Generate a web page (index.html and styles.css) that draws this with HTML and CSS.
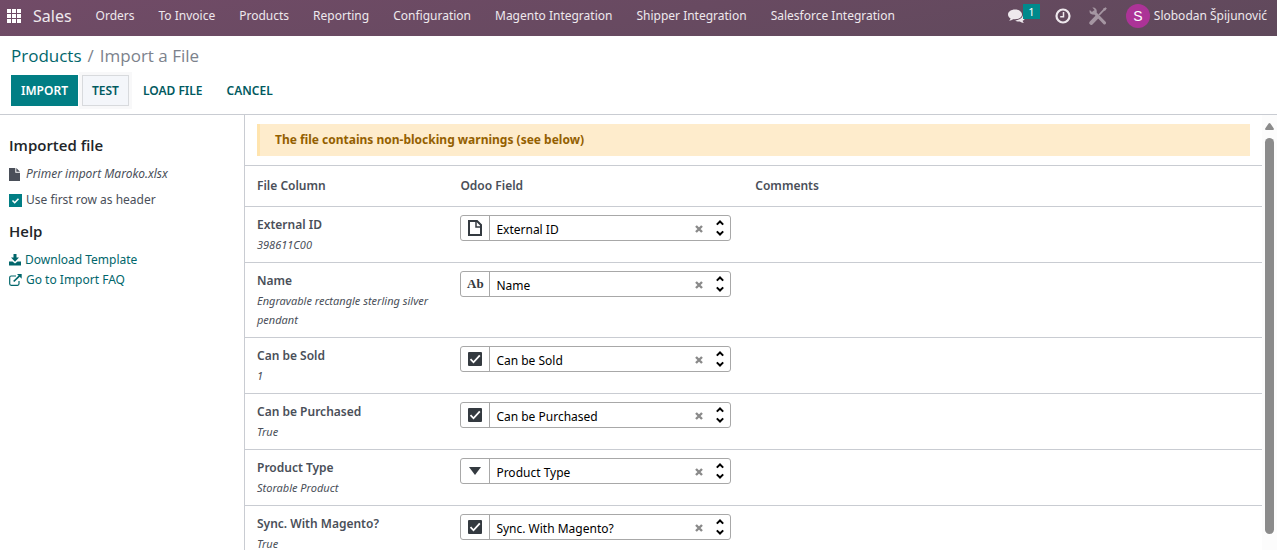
FILE: index.html
```html
<!DOCTYPE html>
<html lang="en">
<head>
<meta charset="utf-8">
<title>Import a File - Sales</title>
<link rel="stylesheet" href="styles.css">
</head>
<body>
<svg class="sprite" aria-hidden="true">
  <symbol id="i-file" viewBox="0 0 16 16"><path d="M2 1H10L14 5V15H2z" fill="none" stroke="currentColor" stroke-width="2"/><path d="M9 1V7H14.500" fill="none" stroke="currentColor" stroke-width="1.500"/></symbol>
  <symbol id="i-check" viewBox="0 0 14 14"><rect width="14" height="14" rx="1" fill="currentColor"/><path d="M2.500 7.200L5.500 10.300L11.800 3.300" fill="none" stroke="#fff" stroke-width="1.800"/></symbol>
  <symbol id="i-down" viewBox="0 0 14 14"><path d="M1 3H13L7 11z" fill="currentColor"/></symbol>
  <symbol id="i-clear" viewBox="0 0 8 8"><path d="M1 1L7 7M7 1L1 7" stroke="currentColor" stroke-width="2.400"/></symbol>
  <symbol id="i-sort" viewBox="0 0 8 16"><path d="M.8 4.600L4 1.500L7.200 4.600M.8 11.400L4 14.500L7.200 11.400" fill="none" stroke="currentColor" stroke-width="2"/></symbol>
</svg>

<header class="navbar">
  <button class="apps" aria-label="Applications">
    <svg width="14" height="14" viewBox="0 0 14 14" fill="currentColor"><path d="M0 0h4v4H0zM5 0h4v4H5zM10 0h4v4h-4zM0 5h4v4H0zM5 5h4v4H5zM10 5h4v4h-4zM0 10h4v4H0zM5 10h4v4H5zM10 10h4v4h-4z"/></svg>
  </button>
  <a class="brand" href="#">Sales</a>
  <nav class="menu">
    <a href="#">Orders</a>
    <a href="#">To Invoice</a>
    <a href="#">Products</a>
    <a href="#">Reporting</a>
    <a href="#">Configuration</a>
    <a href="#">Magento Integration</a>
    <a href="#">Shipper Integration</a>
    <a href="#">Salesforce Integration</a>
  </nav>
  <div class="tray">
    <button class="messages" aria-label="Messages">
      <svg width="17" height="15" viewBox="0 0 17 15" fill="currentColor"><path d="M7 0.500C3 .5 0 2.700 0 5.500c0 1.600 1 3 2.600 3.900-.3 1-.9 1.700-1.500 2.300 1.500-.1 2.900-.7 4-1.500.6.1 1.200.1 1.900.1 4 0 7-2.100 7-4.800S11 .5 7 .5z"/><path d="M15 5.200c.1 3.500-3.400 6.100-7.800 6.200 1.200.9 2.900 1.300 4.700 1.200 1.100.8 2.400 1.400 4.100 1.500-.7-.6-1.200-1.400-1.400-2.300C16 11.100 17 9.900 17 8.500c0-1.300-.8-2.500-2-3.300z"/></svg>
      <span class="badge">1</span>
    </button>
    <button class="activities" aria-label="Activities">
      <svg width="16" height="16" viewBox="0 0 16 16" fill="none" stroke="currentColor"><circle cx="8" cy="8" r="6.500" stroke-width="2.200"/><path d="M8.500 4v4.700H5.200" stroke-width="1.500"/></svg>
    </button>
    <button class="tools" aria-label="Developer tools">
      <svg width="18" height="18" viewBox="0 0 18 18" fill="none" stroke="currentColor"><path d="M15.800 1.800L10 8" stroke-width="1.800"/><path d="M16.600.2l1.200 1.200-2 2.700-2-2z" fill="currentColor" stroke="none"/><path d="M7.600 10.400L2.300 15.900" stroke-width="4" stroke-linecap="round"/><path d="M5 5L15.500 15.900" stroke-width="3" stroke-linecap="round"/><path d="M3.300.6L5.400 2.700 5 4.600 3 5 .8 2.900C0 5 1 7.300 3.300 7.600c.9.200 1.800 0 2.500-.4L7.600 5.400C8.500 2.600 6.100-.3 3.300.6z" fill="currentColor" stroke="none"/></svg>
    </button>
    <button class="user"><span class="avatar">S</span>Slobodan Špijunović</button>
  </div>
</header>

<section class="control">
  <div class="crumbs"><a href="#">Products</a><span>/</span><span>Import a File</span></div>
  <div class="actions">
    <button class="btn primary">IMPORT</button>
    <button class="btn focused">TEST</button>
    <button class="btn">LOAD FILE</button>
    <button class="btn">CANCEL</button>
  </div>
</section>

<div class="content">
  <aside class="sidebar">
    <h2>Imported file</h2>
    <p class="filename"><svg width="11" height="13" viewBox="0 0 11 13" fill="currentColor"><path d="M0 0H6.300V4.700H11V13H0zM7.300 0L11 3.700H7.300z"/></svg><em>Primer import Maroko.xlsx</em></p>
    <label class="option"><input type="checkbox" checked>Use first row as header</label>
    <h2>Help</h2>
    <a class="help" href="#"><svg width="12" height="12" viewBox="0 0 12 12" fill="currentColor"><path d="M4.500 0h3v3.600H10L6 7.800 2 3.600h2.500z"/><path d="M0 7.600h3.500L6 9.600l2.500-2H12V11.500H0z"/></svg>Download Template</a>
    <a class="help" href="#"><svg width="13" height="12" viewBox="0 0 13 12" fill="none" stroke="currentColor"><path d="M7 2H2.200Q.7 2 .7 3.500V9.800Q.7 11.300 2.200 11.300H8.500Q10 11.300 10 9.800V7" stroke-width="1.200"/><path d="M4.700 7.500L10.500 1.800" stroke-width="1.700"/><path d="M8 0h4.700v4.700z" fill="currentColor" stroke="none"/></svg>Go to Import FAQ</a>
  </aside>

  <main class="mapping">
    <div class="alert" role="alert">The file contains non-blocking warnings (see below)</div>
    <table class="fields">
      <thead>
        <tr><th class="source" scope="col">File Column</th><th class="target" scope="col">Odoo Field</th><th scope="col">Comments</th></tr>
      </thead>
      <tbody>
        <tr>
          <td><div class="name">External ID</div><div class="sample">398611C00</div></td>
          <td><div class="picker"><span class="type"><svg width="16" height="16"><use href="#i-file"/></svg></span><input type="text" value="External ID" aria-label="Field for External ID"><button class="clear" aria-label="Clear"><svg width="8" height="8"><use href="#i-clear"/></svg></button><button class="toggle" aria-label="Open list"><svg width="8" height="16"><use href="#i-sort"/></svg></button></div></td>
          <td></td>
        </tr>
        <tr>
          <td><div class="name">Name</div><div class="sample">Engravable rectangle sterling silver pendant</div></td>
          <td><div class="picker"><span class="type letters">Ab</span><input type="text" value="Name" aria-label="Field for Name"><button class="clear" aria-label="Clear"><svg width="8" height="8"><use href="#i-clear"/></svg></button><button class="toggle" aria-label="Open list"><svg width="8" height="16"><use href="#i-sort"/></svg></button></div></td>
          <td></td>
        </tr>
        <tr>
          <td><div class="name">Can be Sold</div><div class="sample">1</div></td>
          <td><div class="picker"><span class="type"><svg width="14" height="14"><use href="#i-check"/></svg></span><input type="text" value="Can be Sold" aria-label="Field for Can be Sold"><button class="clear" aria-label="Clear"><svg width="8" height="8"><use href="#i-clear"/></svg></button><button class="toggle" aria-label="Open list"><svg width="8" height="16"><use href="#i-sort"/></svg></button></div></td>
          <td></td>
        </tr>
        <tr>
          <td><div class="name">Can be Purchased</div><div class="sample">True</div></td>
          <td><div class="picker"><span class="type"><svg width="14" height="14"><use href="#i-check"/></svg></span><input type="text" value="Can be Purchased" aria-label="Field for Can be Purchased"><button class="clear" aria-label="Clear"><svg width="8" height="8"><use href="#i-clear"/></svg></button><button class="toggle" aria-label="Open list"><svg width="8" height="16"><use href="#i-sort"/></svg></button></div></td>
          <td></td>
        </tr>
        <tr>
          <td><div class="name">Product Type</div><div class="sample">Storable Product</div></td>
          <td><div class="picker"><span class="type"><svg width="14" height="14"><use href="#i-down"/></svg></span><input type="text" value="Product Type" aria-label="Field for Product Type"><button class="clear" aria-label="Clear"><svg width="8" height="8"><use href="#i-clear"/></svg></button><button class="toggle" aria-label="Open list"><svg width="8" height="16"><use href="#i-sort"/></svg></button></div></td>
          <td></td>
        </tr>
        <tr>
          <td><div class="name">Sync. With Magento?</div><div class="sample">True</div></td>
          <td><div class="picker"><span class="type"><svg width="14" height="14"><use href="#i-check"/></svg></span><input type="text" value="Sync. With Magento?" aria-label="Field for Sync. With Magento?"><button class="clear" aria-label="Clear"><svg width="8" height="8"><use href="#i-clear"/></svg></button><button class="toggle" aria-label="Open list"><svg width="8" height="16"><use href="#i-sort"/></svg></button></div></td>
          <td></td>
        </tr>
      </tbody>
    </table>
  </main>
  <div class="scrollbar" aria-hidden="true">
    <svg width="9" height="7" viewBox="0 0 9 7"><path d="M4.500 0Q5 0 5.400.6L8.800 5.600Q9.200 7 8 7H1Q-.2 7 .2 5.600L3.600.6Q4 0 4.500 0z" fill="#8b8b8b"/></svg>
    <div class="thumb"></div>
  </div>
</div>
</body>
</html>
```

FILE: styles.css
```css
* { box-sizing: border-box; }

body {
  margin: 0;
  height: 100vh;
  display: flex;
  flex-direction: column;
  overflow: hidden;
  background: #fff;
  color: #4a4f59;
  font: 12px/20px "Noto Sans", "Open Sans", sans-serif;
}

a { color: #01666b; text-decoration: none; }
button, input { font: inherit; color: inherit; }
button { padding: 0; border: 0; background: none; cursor: pointer; }
svg { display: block; flex: none; }
h2, p { margin: 0; }
.sprite { position: absolute; width: 0; height: 0; }

.navbar {
  flex: none;
  display: flex;
  align-items: center;
  height: 36px;
  padding: 0 10px 4px 7px;
  background: linear-gradient(170deg, #714b67, #5f495b);
  color: #eee8ed;
  white-space: nowrap;
}
.navbar a { color: inherit; }
.apps { margin-right: 12px; color: #fff; }
.brand { font-size: 16px; margin-right: 24px; }
.menu { display: flex; gap: 24px; }
.tray { display: flex; align-items: center; margin-left: auto; }
.messages { position: relative; margin-right: 30px; }
.badge {
  position: absolute;
  left: 15px;
  top: -5px;
  width: 17px;
  height: 15px;
  background: #00898c;
  color: #fff;
  font-size: 11px;
  line-height: 15px;
}
.activities { margin-right: 18px; }
.tools { margin-right: 19px; color: #a596a2; }
.user { display: flex; align-items: center; gap: 4px; }
.avatar {
  width: 24px;
  height: 24px;
  border-radius: 50%;
  background: #ac3397;
  color: #fff;
  font: 14px/24px "Liberation Sans", Arial, sans-serif;
}

.control {
  flex: none;
  padding: 8px 11px;
  border-bottom: 1px solid #c9ccd2;
}
.crumbs {
  display: flex;
  gap: 6px;
  font: 17px/24px "Open Sans", "Noto Sans", sans-serif;
  color: #7c828c;
}
.actions { display: flex; gap: 4px; margin-top: 7px; }
.btn {
  height: 31px;
  padding: 1px 9px 0;
  border: 1px solid transparent;
  color: #015a60;
  font-weight: 600;
}
.btn.primary { background: #017e84; color: #fff; }
.btn.focused {
  background: #f4f6fa;
  border-color: #d8dadd;
  box-shadow: 0 0 0 3px #f8f8f9;
}

.content { flex: 1; min-height: 0; display: flex; }

.sidebar { flex: none; width: 245px; padding: 20px 9px; border-right: 1px solid #c9ccd2; }
.sidebar h2 {
  color: #212529;
  font: 600 15px/21px "Open Sans", "Noto Sans", sans-serif;
}
.filename { display: flex; align-items: center; gap: 6px; margin: 8px 0 6px; }
.option { display: flex; align-items: center; gap: 4px; margin-bottom: 11px; }
.option input {
  appearance: none;
  width: 13px;
  height: 13px;
  margin: 0;
  background: #017e84 url("data:image/svg+xml,%3Csvg xmlns='http://www.w3.org/2000/svg' viewBox='0 0 13 13'%3E%3Cpath d='M3.500 6.500L5.700 8.700L9.500 4.700' fill='none' stroke='white' stroke-width='1.600'/%3E%3C/svg%3E");
}
.help { display: flex; align-items: center; gap: 4px; }
.sidebar h2 ~ h2 { margin-bottom: 8px; }

.mapping { flex: 1; min-width: 0; overflow: hidden; }
.alert {
  margin: 9px 12px;
  padding: 6px 15px;
  border-left: 3px solid #ffe4ae;
  background: #feeccc;
  color: #946000;
  font-weight: 700;
}

.fields {
  width: 100%;
  table-layout: fixed;
  border-collapse: separate;
  border-spacing: 0;
  border-top: 1px solid #c9ccd2;
}
.fields th, .fields td {
  padding: 8px 12px;
  border-bottom: 1px solid #c9ccd2;
  text-align: left;
  vertical-align: top;
}
.fields th { padding: 10px 12px; font-weight: 600; }
.source { width: 20%; }
.target { width: 29%; }
.name { font-weight: 600; }
.sample { font-size: 11px; line-height: 19px; font-style: italic; }

.picker {
  display: flex;
  align-items: center;
  height: 26px;
  border: 1px solid #a8a8a8;
  border-radius: 3px;
  color: #000;
}
.type {
  display: flex;
  align-items: center;
  justify-content: center;
  align-self: stretch;
  width: 29px;
  flex: none;
  border-right: 1px solid #a8a8a8;
  color: #343a40;
}
.letters { font: 700 13px/24px "Liberation Serif", serif; }
.picker input {
  flex: 1;
  min-width: 0;
  height: 24px;
  padding: 2px 6px 0;
  border: 0;
  outline: 0;
  background: none;
}
.clear { color: #8a8a8a; margin-right: 13px; padding-top: 2px; }
.toggle { margin-right: 6px; }

.scrollbar {
  flex: none;
  display: flex;
  flex-direction: column;
  align-items: center;
  gap: 8px;
  width: 15px;
  padding: 8px 0 16px;
  background: #fcfcfc;
}
.thumb { flex: 1; width: 9px; border-radius: 5px; background: #8b8b8b; }
```
